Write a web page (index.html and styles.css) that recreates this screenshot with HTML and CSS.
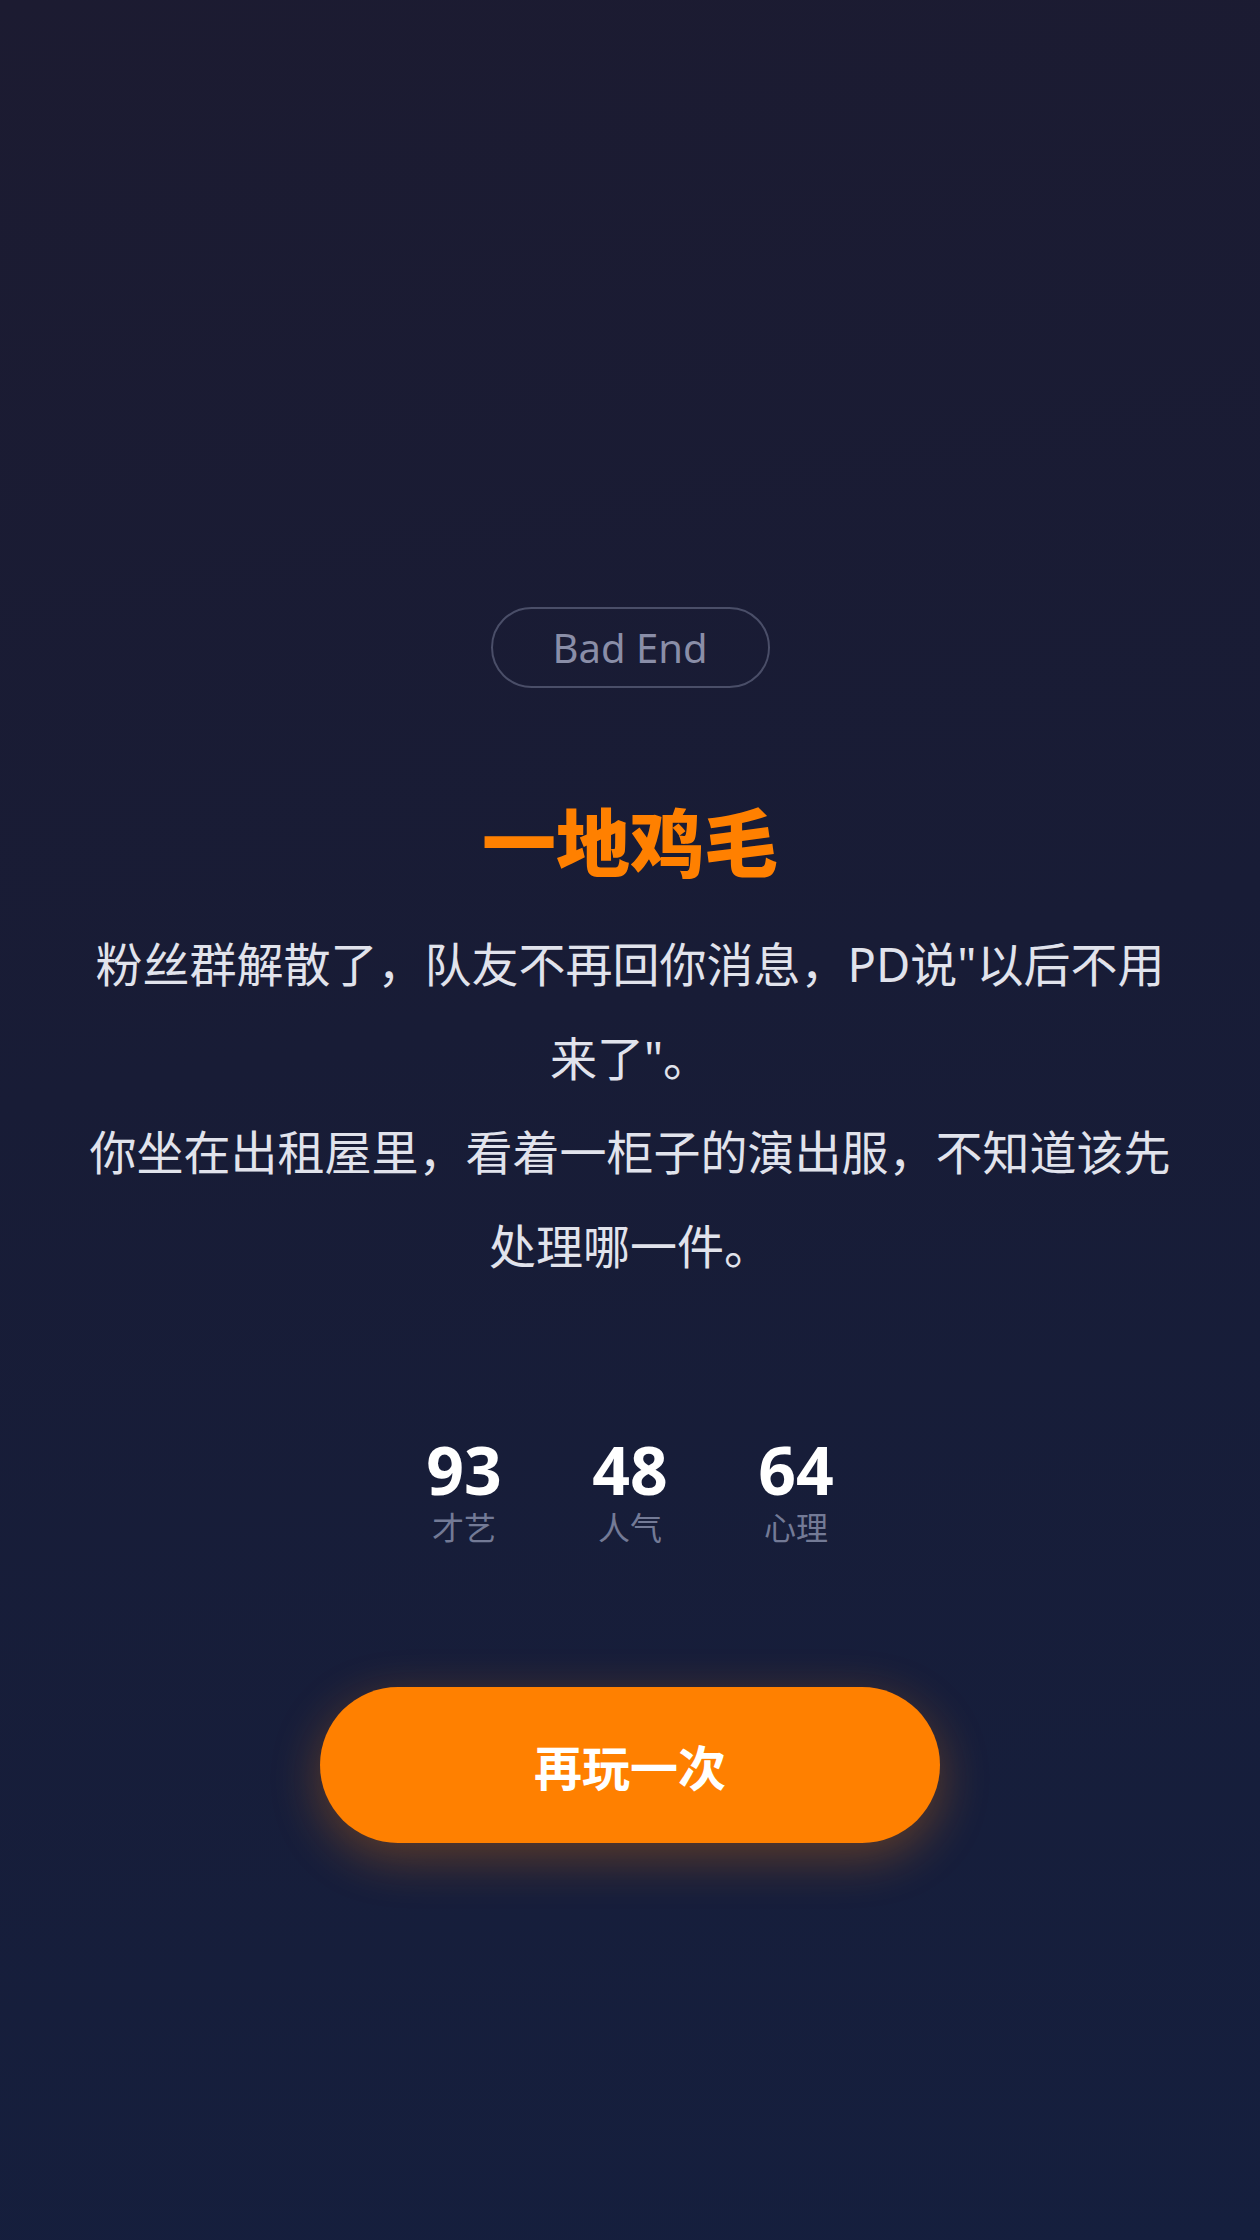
FILE: index.html
```html
<!DOCTYPE html>
<html lang="zh-CN">
<head>
  <meta charset="UTF-8">
  <meta name="viewport" content="width=device-width, initial-scale=1.0">
  <title>结局</title>
  <link rel="stylesheet" href="styles.css">
</head>
<body>
<div class="ending">
  <div class="ending-tag">Bad End</div>

  <h1 class="ending-title">一地鸡毛</h1>

  <p class="ending-story">粉丝群解散了，队友不再回你消息，PD说"以后不用来了"。<br>你坐在出租屋里，看着一柜子的演出服，不知道该先处理哪一件。</p>

  <div class="stats">
    <div class="stat">
      <div class="stat-num">93</div>
      <div class="stat-label">才艺</div>
    </div>
    <div class="stat">
      <div class="stat-num">48</div>
      <div class="stat-label">人气</div>
    </div>
    <div class="stat">
      <div class="stat-num">64</div>
      <div class="stat-label">心理</div>
    </div>
  </div>

  <button class="btn-replay">再玩一次</button>
</div>
</body>
</html>
```

FILE: styles.css
```css
* { margin: 0; padding: 0; box-sizing: border-box; }

body {
  font-family: "Noto Sans", "Noto Sans CJK SC", sans-serif;
  background: linear-gradient(170deg, #1c1b31 0%, #181c36 45%, #151f3e 100%);
  color: #e1e3ec;
  min-height: 2240px;
  text-align: center;
}

.ending {
  display: flex;
  flex-direction: column;
  align-items: center;
  padding: 607px 80px 0;
}

.ending-tag {
  border: 2px solid #4a4e68;
  border-radius: 999px;
  padding: 0 60px;
  line-height: 77px;
  font-size: 40px;
  color: #8a8ea8;
}

.ending-title {
  margin-top: 106px;
  font-family: "Noto Sans CJK SC", sans-serif;
  font-size: 74px;
  font-weight: 900;
  line-height: 90px;
  color: #ff8000;
}

.ending-story {
  margin-top: 33px;
  font-family: "Noto Sans", "Noto Sans CJK SC", sans-serif;
  font-size: 47px;
  line-height: 94px;
  color: #e1e3ec;
}

/* three end stats in a row */
.stats {
  display: flex;
  justify-content: center;
  gap: 90px;
  margin-top: 141px;
}

.stat {
  width: 76px;
}

.stat-num {
  font-size: 66px;
  font-weight: 700;
  line-height: 70px;
  color: #fff;
}

.stat-label {
  margin-top: 2px;
  font-family: "Noto Sans CJK SC", sans-serif;
  font-size: 32px;
  line-height: 40px;
  color: #737a96;
}

.btn-replay {
  margin-top: 141px;
  width: 620px;
  height: 156px;
  border: none;
  border-radius: 999px;
  background: #ff8000;
  color: #fff;
  font-family: "Noto Sans CJK SC", sans-serif;
  font-size: 48px;
  font-weight: 700;
  box-shadow: 0 14px 50px rgba(255, 128, 0, 0.32);
  cursor: pointer;
}
```
